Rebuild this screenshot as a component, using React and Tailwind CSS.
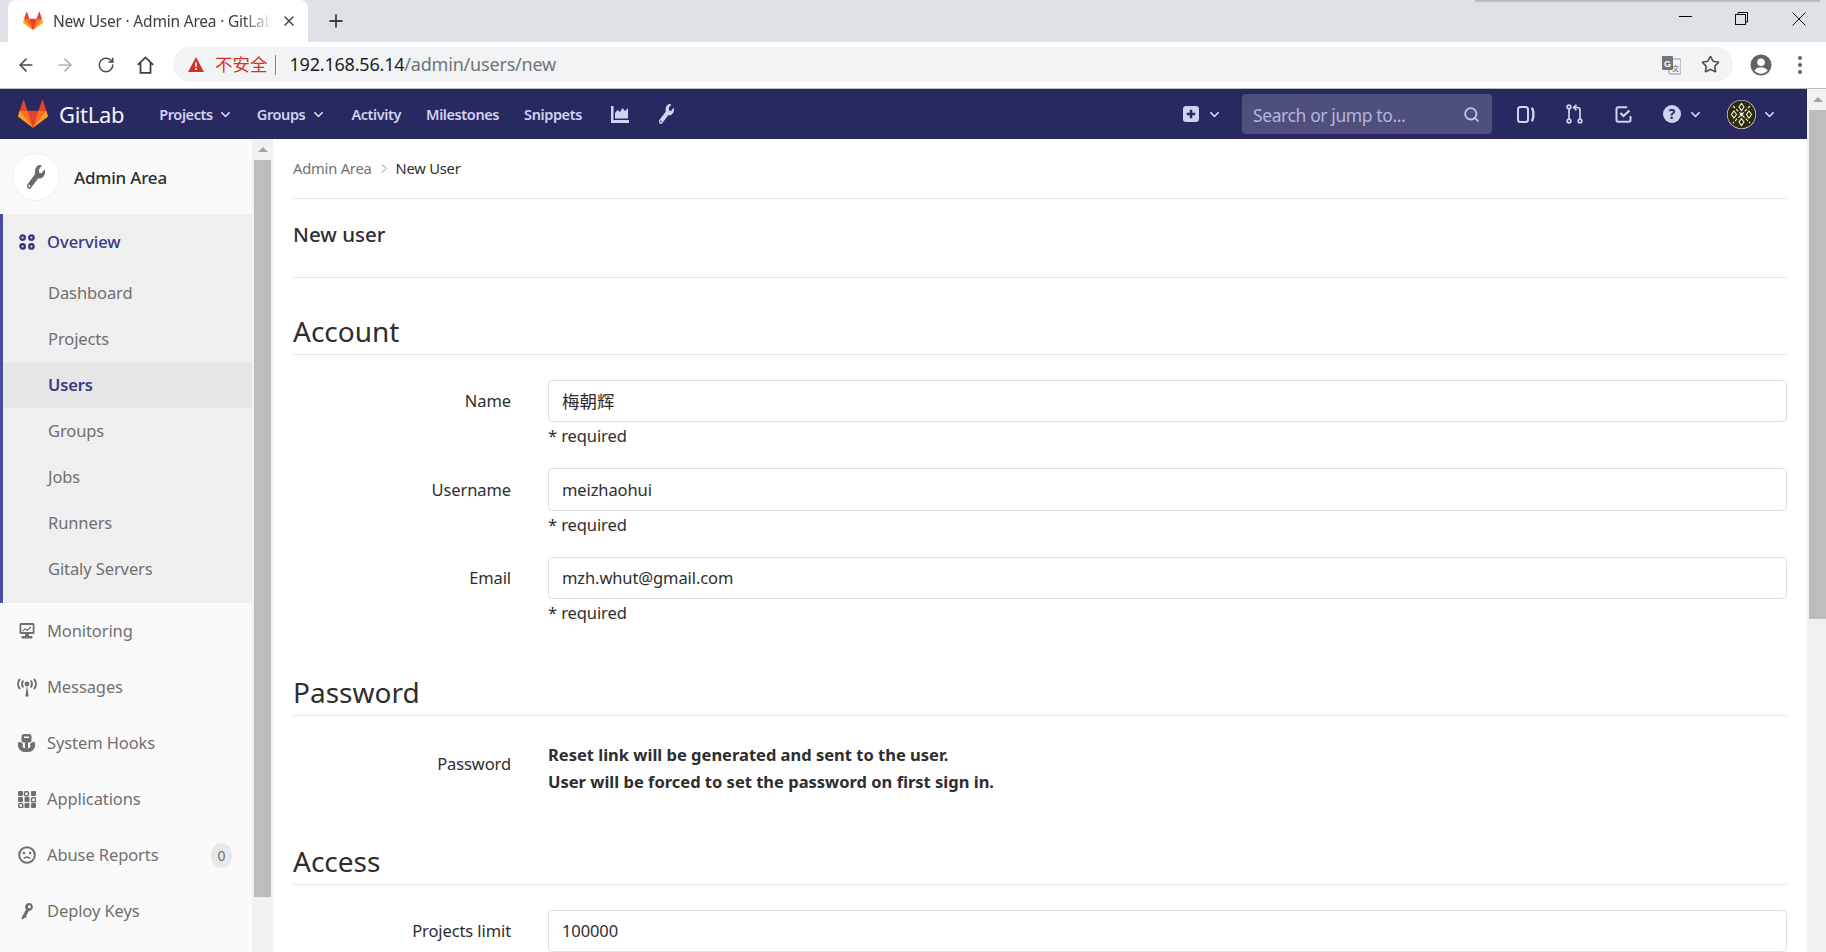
import React from "react";
import { ArrowLeft, ArrowRight, RotateCw, Star, Search, ChevronDown, Plus, X } from "lucide-react";
import { FaWrench } from "react-icons/fa";

const Tanuki = ({ className }) => (
    <svg className={className} viewBox="0 0 36 36">
        <path fill="#e24329" d="M2 14l9.38 9v-9l-4-12.28c-.205-.632-1.176-.632-1.38 0z" />
        <path fill="#e24329" d="M34 14l-9.38 9v-9l4-12.28c.205-.632 1.176-.632 1.38 0z" />
        <path fill="#e24329" d="M18,34.38 3,14 33,14 Z" />
        <path fill="#fc6d26" d="M18,34.38 11.38,14 2,14 6,25Z" />
        <path fill="#fc6d26" d="M18,34.38 24.62,14 34,14 30,25Z" />
        <path fill="#fca326" d="M2 14L.1 20.16c-.18.565 0 1.2.5 1.56l17.42 12.66z" />
        <path fill="#fca326" d="M34 14l1.9 6.16c.18.565 0 1.2-.5 1.56L18 34.38z" />
    </svg>
);

const ChartIcon = () => (
    <svg className="h-[17px] w-[18px]" viewBox="0 0 18 17" fill="#d1d1f0">
        <path d="M0 0h2.500v14H18v3H0z" />
        <path d="M4 7l2.500-3 2.500 2 2.500-4 2.500 3 3-3v10.500H4z" />
    </svg>
);

const PlusBox = () => (
    <svg className="h-[16px] w-[16px]" viewBox="0 0 15 15">
        <rect width="15" height="15" rx="3" fill="#d1d1f0" />
        <path d="M7.500 3.500v8M3.500 7.500h8" stroke="#292961" strokeWidth="2.400" />
    </svg>
);

const IssuesIcon = () => (
    <svg className="h-[19px] w-[18px]" viewBox="0 0 18 18" fill="none" stroke="#d1d1f0" strokeWidth="2">
        <rect x="1" y="1.500" width="10" height="15" rx="2.500" />
        <path d="M14.500 2.500c2.500 1.500 2.500 11.500 0 13" strokeWidth="2.400" />
    </svg>
);

const MergeIcon = () => (
    <svg className="h-[20px] w-[17px]" viewBox="0 0 17 20" fill="none" stroke="#d1d1f0" strokeWidth="1.700">
        <circle cx="3" cy="3" r="1.800" />
        <circle cx="3" cy="17" r="1.800" />
        <circle cx="14" cy="17" r="1.800" />
        <path d="M3 5v10M14 15V6c0-1.500-1-2.500-2.500-2.500H8" />
        <path d="M10.500 .8L7.500 3.500l3 2.700" />
    </svg>
);

const TodoIcon = () => (
    <svg className="h-[17px] w-[17px]" viewBox="0 0 17 17" fill="none" stroke="#d1d1f0" strokeWidth="2">
        <path d="M15.500 10v4c0 1-.6 1.700-1.700 1.700H3.200C2 15.700 1.500 15 1.500 14V3c0-1 .6-1.700 1.700-1.700h9" />
        <path d="M5.500 7l3 3 6-5.500" strokeWidth="2.200" />
    </svg>
);

const HelpIcon = () => (
    <svg className="h-[18px] w-[18px]" viewBox="0 0 17 17">
        <circle cx="8.500" cy="8.500" r="8.500" fill="#d1d1f0" />
        <text x="8.500" y="13.300" textAnchor="middle" fontSize="13" fontWeight="700" fill="#292961" fontFamily="Noto Sans">?</text>
    </svg>
);

const AvatarIcon = () => (
    <svg className="h-[29px] w-[29px]" viewBox="0 0 29 29">
        <circle cx="14.500" cy="14.500" r="14.500" fill="#f5f5ef" />
        <circle cx="14.500" cy="14.500" r="13.900" fill="#2f2b0c" />
        <path d="M6 6l17 17M23 6L6 23" stroke="#f5f5ef" strokeWidth="1.100" strokeDasharray="3 1.500" />
        <path d="M14.500 3.500l2.500 3.500-2.500 3.500L12 7zM14.500 18.500l2.500 3.500-2.500 3.500-2.500-3.500zM7 11l2.500 3.500L7 18l-2.500-3.500zM22 11l2.500 3.500L22 18l-2.500-3.500z" fill="none" stroke="#f5f5ef" strokeWidth="1.100" />
        <path d="M14.500 12.500l2 2-2 2-2-2z" fill="#f5f5ef" />
    </svg>
);

const TranslateIcon = () => (
    <svg className="h-[20px] w-[19px]" viewBox="0 0 19 20">
        <rect x="7" y="4" width="12" height="15" rx="1" fill="#f5f5f5" stroke="#8a8d91" />
        <rect x="0" y="1" width="11" height="14" rx="1" fill="#70757a" />
        <text x="5.500" y="11.500" textAnchor="middle" fontSize="9" fontWeight="700" fill="#fff" fontFamily="Liberation Sans">G</text>
        <text x="13.500" y="16" textAnchor="middle" fontSize="7" fill="#5f6368" fontFamily="Noto Sans CJK SC">文</text>
    </svg>
);

const HomeIcon = () => (
    <svg className="h-[18px] w-[17px]" viewBox="0 0 17 18" fill="none" stroke="#3c4043" strokeWidth="1.800">
        <path d="M.8 8.800L8.500 1.400l7.700 7.400M3.500 7v9.800h10V7" />
    </svg>
);

const AccountIcon = () => (
    <svg className="h-[22px] w-[22px]" viewBox="0 0 22 22">
        <circle cx="11" cy="11" r="10.500" fill="#5f6368" />
        <circle cx="11" cy="8.200" r="3.800" fill="#fff" />
        <path d="M4.300 16.500c1.800-2.400 4-3.200 6.700-3.200s4.900.8 6.700 3.200c-1.700 2-4 3.200-6.700 3.200s-5-1.200-6.700-3.200z" fill="#fff" />
    </svg>
);

const WarnIcon = () => (
    <svg className="h-[15px] w-[16px]" viewBox="0 0 16 15">
        <path d="M8 0l8 15H0z" fill="#d93025" />
        <path d="M8 5.500v4.500M8 11v2" stroke="#fff" strokeWidth="1.600" />
    </svg>
);

const OverviewIcon = () => (
    <svg className="h-[16px] w-[16px]" viewBox="0 0 16 16" fill="none" stroke="#393982" strokeWidth="2.400">
        <circle cx="3.600" cy="3.600" r="2.200" />
        <circle cx="12.400" cy="3.600" r="2.200" />
        <circle cx="3.600" cy="12.400" r="2.200" />
        <circle cx="12.400" cy="12.400" r="2.200" />
    </svg>
);

const MonitorIcon = () => (
    <svg className="h-[16px] w-[16px]" viewBox="0 0 16 16" fill="#707070">
        <path d="M2 0h12a1.500 1.500 0 011.500 1.500v8A1.500 1.500 0 0114 11H2A1.500 1.500 0 01.500 9.500v-8A1.500 1.500 0 012 0zm.300 2v7h11.400V2z" />
        <path d="M3 8l3-3 2 1.500L12 3v2L8 8 6 6.500 4 8.500z" />
        <rect x="6" y="11" width="4" height="2" />
        <rect x="2.500" y="13" width="11" height="2.500" rx="1" />
    </svg>
);

const AntennaIcon = () => (
    <svg className="h-[19px] w-[20px]" viewBox="0 0 20 19" fill="none" stroke="#707070" strokeWidth="2">
        <circle cx="10" cy="6" r="2.400" fill="#707070" stroke="none" />
        <path d="M10 7l-1.700 11.500h3.400z" fill="#707070" stroke="none" />
        <path d="M6.300 2.500c-1.500 2-1.500 5 0 7M13.700 2.500c1.500 2 1.500 5 0 7" />
        <path d="M3 1c-2.600 3-2.600 7 0 10M17 1c2.600 3 2.600 7 0 10" />
    </svg>
);

const HookIcon = () => (
    <svg className="h-[18px] w-[17px]" viewBox="0 0 17 18" fill="#707070">
        <path d="M6 0h5a2.500 2.500 0 012.500 2.500V6A2.500 2.500 0 0111 8.500H6A2.500 2.500 0 013.500 6V2.500A2.500 2.500 0 016 0zm0 2.400v1.700h5V2.400z" />
        <rect x="7" y="8" width="3" height="7.500" />
        <path d="M2 8a3 3 0 012.500 4.500c.6 1.300 2 1.800 3.500 1.800h1c1.500 0 2.900-.5 3.500-1.800A3 3 0 0115 8a2.900 2.900 0 011.500 5.500C15.500 16.500 13 18 10 18H7c-3 0-5.500-1.500-6.500-4.500A2.900 2.900 0 012 8z" />
    </svg>
);

const AppsIcon = () => (
    <svg className="h-[17px] w-[18px]" viewBox="0 0 18 17" fill="#707070">
        <rect x="0" y="0" width="5" height="5" rx="1" />
        <rect x="6.500" y="0.800" width="4" height="4" rx="1" fill="none" stroke="#707070" strokeWidth="1.500" />
        <rect x="13" y="0" width="5" height="5" rx="1" />
        <rect x="0" y="6" width="5" height="5" rx="1" />
        <rect x="6.500" y="6" width="5" height="5" rx="1" />
        <rect x="13.500" y="6.800" width="4" height="4" rx="1" fill="none" stroke="#707070" strokeWidth="1.500" />
        <rect x="0.800" y="12.500" width="4" height="4" rx="1" fill="none" stroke="#707070" strokeWidth="1.500" />
        <rect x="6.500" y="12" width="5" height="5" rx="1" />
        <rect x="13" y="12" width="5" height="5" rx="1" />
    </svg>
);

const FrownIcon = () => (
    <svg className="h-[18px] w-[18px]" viewBox="0 0 18 18" fill="none" stroke="#707070" strokeWidth="2">
        <circle cx="9" cy="9" r="7.800" />
        <circle cx="6" cy="7" r="1.300" fill="#707070" stroke="none" />
        <circle cx="12" cy="7" r="1.300" fill="#707070" stroke="none" />
        <path d="M5.800 12.500c1.800-1.900 4.600-1.900 6.400 0" strokeWidth="1.600" />
    </svg>
);

const KeyIcon = () => (
    <svg className="h-[17px] w-[12px]" viewBox="0 0 12 17" fill="#707070">
        <path d="M8 0a4 4 0 013 6.500A4 4 0 018 8L5 13l.8 1.300-1.600.8-.4-.8-.8 1.200-2 1.200-.5-2L5 6.500A4 4 0 018 0zm.300 2.300a1.500 1.500 0 100 3 1.500 1.500 0 000-3z" />
    </svg>
);

const navLink = "pt-[2px] text-[14.500px] font-semibold tracking-[-0.4px] text-[#d1d1f0]";

const TabStrip = () => (
    <div className="relative flex h-[42px] shrink-0 bg-[#dee1e6]">
        <div className="ml-2 flex h-[42px] w-[300px] items-center rounded-t-[8px] bg-white pl-[15px]">
            <Tanuki className="h-[20px] w-[20px]" />
            <span className="ml-[10px] w-[220px] overflow-hidden whitespace-nowrap pt-[1px] text-[15.500px] tracking-[-0.2px] text-[#3c4043] [mask-image:linear-gradient(to_right,black_86%,transparent)]">
                New User · Admin Area · GitLab
            </span>
            <X size={16} strokeWidth={2.4} className="ml-[8px] text-[#45494d]" />
        </div>
        <Plus size={20} strokeWidth={2.2} className="ml-[18px] mt-[11px] text-[#3c4043]" />
        <div className="absolute right-[6px] top-0 h-[3px] w-[345px] bg-linear-to-b from-[#a9acb0] to-[#dee1e6]" />
        <div className="ml-auto flex items-start pt-[12px]">
            <div className="mt-[4px] h-px w-[13px] bg-black" />
            <svg className="ml-[43px] h-[13px] w-[13px]" viewBox="0 0 13 13" fill="none" stroke="#111">
                <path d="M3 2.500V.5h9.500v9.500h-2" />
                <rect x=".5" y="2.500" width="10" height="10" />
            </svg>
            <svg className="ml-[44px] mr-[20px] h-[14px] w-[14px]" viewBox="0 0 14 14" stroke="#111" strokeWidth="1">
                <path d="M.5.5l13 13M13.500.5l-13 13" />
            </svg>
        </div>
    </div>
);

const Toolbar = () => (
    <div className="flex h-[47px] shrink-0 items-center border-b border-[#b9b9b9] bg-white pb-px">
        <ArrowLeft size={20} strokeWidth={2} className="ml-[16px] text-[#4a4e52]" />
        <ArrowRight size={20} strokeWidth={2} className="ml-[19px] text-[#b0b3b6]" />
        <RotateCw size={18} strokeWidth={2} className="ml-[22px] text-[#4a4e52]" />
        <div className="ml-[22px]">
            <HomeIcon />
        </div>
        <div className="ml-[19px] flex h-[35px] w-[1560px] items-center rounded-full bg-[#f1f3f4] pl-[15px] pr-[13px]">
            <WarnIcon />
            <span className="ml-[11px] text-[17.500px] leading-none text-[#d93025]">不安全</span>
            <div className="ml-[7px] h-[20px] w-px bg-[#80868b]" />
            <span className="ml-[14px] text-[18px] tracking-[-0.2px] text-[#202124]">
                192.168.56.14<span className="text-[#6f7478]">/admin/users/new</span>
            </span>
            <div className="ml-auto">
                <TranslateIcon />
            </div>
            <Star size={19} strokeWidth={2} className="ml-[20px] text-[#4a4e52]" />
        </div>
        <div className="ml-[17px]">
            <AccountIcon />
        </div>
        <div className="ml-[26px] flex flex-col gap-[3px]">
            <div className="h-[4px] w-[4px] rounded-full bg-[#5f6368]" />
            <div className="h-[4px] w-[4px] rounded-full bg-[#5f6368]" />
            <div className="h-[4px] w-[4px] rounded-full bg-[#5f6368]" />
        </div>
    </div>
);

const TopNav = () => (
    <div className="flex h-[50px] shrink-0 items-center bg-[#292961] pl-[18px]">
        <Tanuki className="h-[30px] w-[30px]" />
        <span className="ml-[11px] pt-[1px] text-[22px] tracking-[-0.3px] text-[#f4f4fb]">GitLab</span>
        <span className={`ml-[35px] ${navLink}`}>Projects</span>
        <ChevronDown size={15} strokeWidth={2.4} className="ml-[5px] text-[#d1d1f0]" />
        <span className={`ml-[24px] ${navLink}`}>Groups</span>
        <ChevronDown size={15} strokeWidth={2.4} className="ml-[6px] text-[#d1d1f0]" />
        <span className={`ml-[25px] ${navLink}`}>Activity</span>
        <span className={`ml-[25px] ${navLink}`}>Milestones</span>
        <span className={`ml-[25px] ${navLink}`}>Snippets</span>
        <div className="ml-[29px]">
            <ChartIcon />
        </div>
        <div className="ml-[30px]">
            <FaWrench className="h-[20px] w-[15px] text-[#d1d1f0]" preserveAspectRatio="none" />
        </div>

        <div className="ml-auto flex items-center pr-[30px]">
            <PlusBox />
            <ChevronDown size={15} strokeWidth={2.4} className="ml-[8px] text-[#d1d1f0]" />
            <div className="ml-[20px] flex h-[40px] w-[250px] items-center justify-between rounded-[4px] bg-[#4f4f7e] pl-[11px] pr-[12px]">
                <span className="pt-[2px] text-[17.500px] tracking-[-0.4px] text-[#b4b4dc]">Search or jump to...</span>
                <Search size={17} strokeWidth={2.6} className="text-[#c6c6e6]" />
            </div>
            <div className="ml-[25px]">
                <IssuesIcon />
            </div>
            <div className="ml-[31px]">
                <MergeIcon />
            </div>
            <div className="ml-[32px]">
                <TodoIcon />
            </div>
            <div className="ml-[31px]">
                <HelpIcon />
            </div>
            <ChevronDown size={15} strokeWidth={2.4} className="ml-[7px] text-[#d1d1f0]" />
            <div className="ml-[24px]">
                <AvatarIcon />
            </div>
            <ChevronDown size={15} strokeWidth={2.4} className="ml-[6px] text-[#d1d1f0]" />
        </div>
    </div>
);

const subItems = ["Dashboard", "Projects", "Users", "Groups", "Jobs", "Runners", "Gitaly Servers"];

const bottomItems = [
    { label: "Monitoring", icon: <MonitorIcon /> },
    { label: "Messages", icon: <AntennaIcon /> },
    { label: "System Hooks", icon: <HookIcon /> },
    { label: "Applications", icon: <AppsIcon /> },
    { label: "Abuse Reports", icon: <FrownIcon />, badge: "0" },
    { label: "Deploy Keys", icon: <KeyIcon /> },
];

const Sidebar = () => (
    <div className="flex w-[252px] shrink-0 flex-col bg-[#fafafa]">
        <div className="flex h-[75px] shrink-0 items-center pl-[12px]">
            <div className="flex h-[48px] w-[48px] items-center justify-center rounded-full border border-[#f0f0f0] bg-white">
                <FaWrench className="h-[24px] w-[18px] text-[#6b6b6b]" preserveAspectRatio="none" />
            </div>
            <span className="ml-[14px] pt-[2px] text-[17px] font-medium tracking-[-0.2px] text-[#2e2e2e]">Admin Area</span>
        </div>
        <div className="h-[389px] shrink-0 border-l-[3px] border-[#4b4ba3] bg-[#efefef]">
            <div className="flex h-[56px] items-center pl-[16px]">
                <OverviewIcon />
                <span className="ml-[12px] pt-[1px] text-[16.500px] font-medium tracking-[0px] text-[#393982]">Overview</span>
            </div>
            {subItems.map((item) => (
                <div
                    key={item}
                    className={`flex h-[46px] items-center pl-[45px] pt-[1px] text-[16.500px] tracking-[-0.1px] ${item === "Users" ? "bg-[#e6e6e6] font-semibold text-[#393982]" : "text-[#707070]"}`}
                >
                    {item}
                </div>
            ))}
        </div>
        {bottomItems.map((item) => (
            <div key={item.label} className="flex h-[56px] shrink-0 items-center">
                <div className="flex w-[47px] shrink-0 justify-center pl-[6px]">{item.icon}</div>
                <span className="text-[16.500px] tracking-[-0.1px] text-[#707070]">{item.label}</span>
                {item.badge && (
                    <span className="ml-auto mr-[20px] flex h-[25px] w-[21px] items-center justify-center rounded-full bg-[#e9e9e9] text-[14px] text-[#707070]">
                        {item.badge}
                    </span>
                )}
            </div>
        ))}
    </div>
);

const SideScrollbar = () => (
    <div className="flex w-[21px] shrink-0 flex-col bg-[#f1f1f1] pl-[2px] pr-[2px]">
        <div className="flex h-[21px] shrink-0 items-center justify-center">
            <div className="h-0 w-0 border-x-[5px] border-b-[5px] border-x-transparent border-b-[#a3a3a3]" />
        </div>
        <div className="h-[737px] shrink-0 bg-[#bdbdbd]" />
    </div>
);

const PageScrollbar = () => (
    <div className="flex w-[19px] shrink-0 flex-col bg-[#f1f1f1] pl-[2px]">
        <div className="flex h-[21px] shrink-0 items-center justify-center">
            <div className="h-0 w-0 border-x-[5px] border-b-[5px] border-x-transparent border-b-[#a3a3a3]" />
        </div>
        <div className="h-[509px] shrink-0 bg-[#bdbdbd]" />
    </div>
);

const SectionTitle = ({ children, height }) => (
    <div className={`flex ${height} items-end border-b border-[#e5e5e5] pb-[7px]`}>
        <h3 className="text-[28px] leading-[32px] tracking-[0px] text-[#2e2e2e]">{children}</h3>
    </div>
);

const Field = ({ label, value, height, hint, inputHeight = "h-[42px]" }) => (
    <div className={`flex ${height}`}>
        <label className={`flex ${inputHeight} w-[218px] shrink-0 items-center justify-end pt-[1px] text-[16.500px] tracking-[-0.1px] text-[#2e2e2e]`}>
            {label}
        </label>
        <div className="ml-[37px] flex-1">
            <div className={`flex ${inputHeight} items-center rounded-[4px] border border-[#dfdfdf] bg-white pl-[13px] pt-[1px] text-[16.500px] tracking-[-0.1px] text-[#2e2e2e]`}>
                {value}
            </div>
            {hint && <p className="mt-[2px] text-[16.500px] leading-[24px] tracking-[-0.1px] text-[#2e2e2e]">* required</p>}
        </div>
    </div>
);

const MainContent = () => (
    <div className="min-w-0 flex-1 overflow-hidden bg-white pl-[20px] pr-[20px] [&>*]:w-[1494px]">
        <div className="flex h-[60px] items-center gap-[9px] border-b border-[#e5e5e5] text-[14.700px] tracking-[-0.2px]">
            <span className="text-[#707070]">Admin Area</span>
            <svg className="h-[9px] w-[6px]" viewBox="0 0 6 9" fill="none" stroke="#8c8c8c">
                <path d="M1 .5l4 4-4 4" />
            </svg>
            <span className="text-[#2e2e2e]">New User</span>
        </div>
        <div className="flex h-[79px] items-center border-b border-[#e5e5e5] pb-[8px]">
            <h3 className="text-[20.500px] font-medium text-[#2e2e2e]">New user</h3>
        </div>

        <SectionTitle height="h-[77px]">Account</SectionTitle>
        <div className="pt-[25px]">
            <Field label="Name" value={<span className="text-[17.500px] tracking-[0px]">梅朝辉</span>} height="h-[88px]" hint />
            <Field label="Username" value="meizhaohui" height="h-[89px]" inputHeight="h-[43px]" hint />
            <Field label="Email" value="mzh.whut@gmail.com" height="h-[88px]" hint />
        </div>

        <SectionTitle height="h-[71px]">Password</SectionTitle>
        <div className="flex h-[98px] pt-[25px]">
            <label className="w-[218px] shrink-0 pt-[9px] text-right text-[16.500px] leading-[27px] tracking-[-0.1px] text-[#2e2e2e]">
                Password
            </label>
            <p className="ml-[37px] text-[16.500px] font-bold leading-[27px] tracking-[0px] text-[#2e2e2e]">
                Reset link will be generated and sent to the user.
                <br />
                User will be forced to set the password on first sign in.
            </p>
        </div>

        <SectionTitle height="h-[71px]">Access</SectionTitle>
        <div className="pt-[25px]">
            <Field label="Projects limit" value="100000" height="h-[42px]" />
        </div>
    </div>
);

export default function App() {
    return (
        <div className="flex h-screen w-full flex-col overflow-hidden bg-white [font-family:'Noto_Sans','Noto_Sans_CJK_SC',sans-serif]">
            <TabStrip />
            <Toolbar />
            <div className="flex min-h-0 flex-1">
                <div className="flex min-w-0 flex-1 flex-col">
                    <TopNav />
                    <div className="flex min-h-0 flex-1">
                        <Sidebar />
                        <SideScrollbar />
                        <MainContent />
                    </div>
                </div>
                <PageScrollbar />
            </div>
        </div>
    );
}
